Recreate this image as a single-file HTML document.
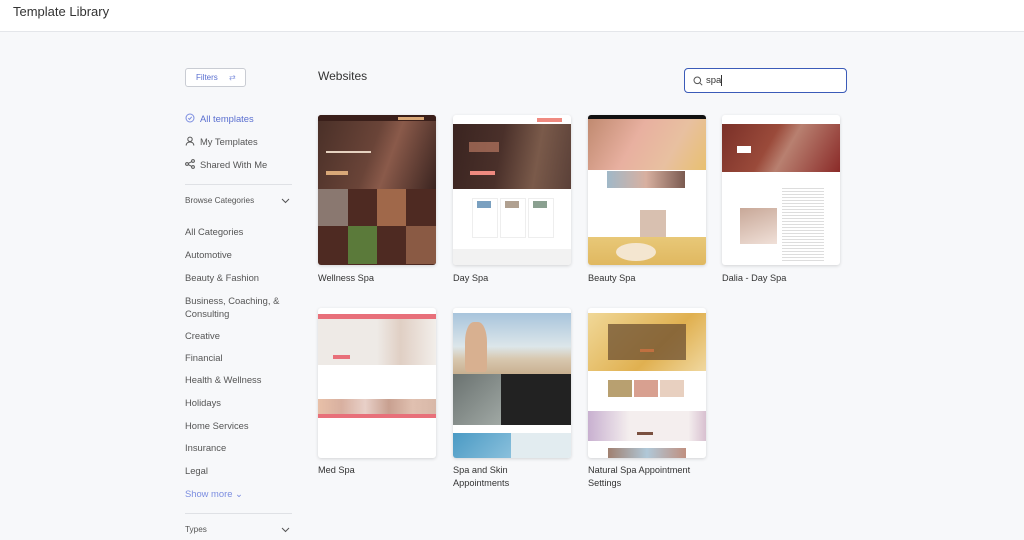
<!DOCTYPE html>
<html><head><meta charset="utf-8"><style>
*{margin:0;padding:0;box-sizing:border-box}
body{width:1024px;height:540px;overflow:hidden;background:#f7f8fa;font-family:"Liberation Sans",sans-serif;position:relative;color:#333}
.hdr{position:absolute;left:0;top:0;width:1024px;height:32px;background:#fff;border-bottom:1px solid #e4e6ea}
.hdr span{position:absolute;left:13px;top:4px;font-size:13px;color:#333}
.a{position:absolute}
.side{font-size:9.4px;color:#555}
.card{position:absolute;width:118px;height:150px;background:#fff;border-radius:3px;overflow:hidden;box-shadow:0 1px 3px rgba(0,0,0,.15)}
.card div{position:absolute}
.lbl{position:absolute;font-size:9.2px;color:#333;line-height:13px}
</style></head><body>
<div class="hdr"><span>Template Library</span></div>

<div class="a" style="left:185px;top:68px;width:61px;height:19px;border:1px solid #c9ccd3;border-radius:3px;background:#fff;font-size:8px;color:#5a6fd0;padding:4px 0 0 10px">Filters <span style="margin-left:9px;color:#8a9ae0">⇄</span></div>

<svg class="a" style="left:185px;top:113px" width="10" height="10" viewBox="0 0 10 10"><circle cx="5" cy="5" r="4" fill="none" stroke="#7b8de0" stroke-width="1"/><path d="M3.3 5.2l1.2 1.2 2.2-2.6" fill="none" stroke="#7b8de0" stroke-width="1"/></svg>
<div class="a side" style="left:200px;top:113px;color:#5a6fd0">All templates</div>
<svg class="a" style="left:185px;top:136px" width="10" height="10" viewBox="0 0 10 10"><circle cx="5" cy="3.3" r="2.2" fill="none" stroke="#555" stroke-width="1"/><path d="M1.2 9.5c0-2.2 1.7-3.5 3.8-3.5s3.8 1.3 3.8 3.5" fill="none" stroke="#555" stroke-width="1"/></svg>
<div class="a side" style="left:200px;top:136px">My Templates</div>
<svg class="a" style="left:185px;top:159px" width="10" height="10" viewBox="0 0 10 10"><circle cx="2" cy="5" r="1.4" fill="none" stroke="#555"/><circle cx="8" cy="2" r="1.4" fill="none" stroke="#555"/><circle cx="8" cy="8" r="1.4" fill="none" stroke="#555"/><path d="M3.2 4.4l3.6-1.8M3.2 5.6l3.6 1.8" stroke="#555"/></svg>
<div class="a side" style="left:200px;top:159px">Shared With Me</div>
<div class="a" style="left:185px;top:184px;width:107px;height:1px;background:#dfe1e5"></div>
<div class="a side" style="left:185px;top:196px;font-size:8.2px">Browse Categories</div>
<svg class="a" style="left:281px;top:198px" width="9" height="6" viewBox="0 0 9 6"><path d="M1 1l3.5 3.5L8 1" fill="none" stroke="#555"/></svg>

<div class="a side" style="left:185px;top:226px">All Categories</div>
<div class="a side" style="left:185px;top:249px">Automotive</div>
<div class="a side" style="left:185px;top:272px">Beauty &amp; Fashion</div>
<div class="a side" style="left:185px;top:294px;line-height:13px">Business, Coaching, &amp;<br>Consulting</div>
<div class="a side" style="left:185px;top:330px">Creative</div>
<div class="a side" style="left:185px;top:352px">Financial</div>
<div class="a side" style="left:185px;top:374px">Health &amp; Wellness</div>
<div class="a side" style="left:185px;top:397px">Holidays</div>
<div class="a side" style="left:185px;top:420px">Home Services</div>
<div class="a side" style="left:185px;top:442px">Insurance</div>
<div class="a side" style="left:185px;top:465px">Legal</div>
<div class="a side" style="left:185px;top:488px;color:#7b8de0">Show more ⌄</div>
<div class="a" style="left:185px;top:513px;width:107px;height:1px;background:#dfe1e5"></div>
<div class="a side" style="left:185px;top:525px;font-size:8.2px">Types</div>
<svg class="a" style="left:281px;top:527px" width="9" height="6" viewBox="0 0 9 6"><path d="M1 1l3.5 3.5L8 1" fill="none" stroke="#555"/></svg>

<div class="a" style="left:318px;top:69px;font-size:12px;color:#333">Websites</div>
<div class="a" style="left:684px;top:68px;width:163px;height:25px;border:1px solid #3b5bb8;border-radius:4px;background:#fff"></div>
<svg class="a" style="left:693px;top:76px" width="10" height="10" viewBox="0 0 10 10"><circle cx="4.3" cy="4.3" r="3.3" fill="none" stroke="#555"/><path d="M6.8 6.8l2.4 2.4" stroke="#555"/></svg>
<div class="a" style="left:706px;top:75px;font-size:9.5px;color:#333">spa<span style="border-left:1px solid #333;margin-left:0"></span></div>

<!-- Row 1 -->
<div class="card" style="left:318px;top:115px;background:#4e2a22">
 <div style="left:0;top:0;width:118px;height:6px;background:#3a1f1a"></div>
 <div style="left:80px;top:2px;width:26px;height:3px;background:#d9a878"></div>
 <div style="left:0;top:6px;width:118px;height:68px;background:linear-gradient(110deg,#4a3028 0%,#6a4438 45%,#8a5a4a 60%,#3a2420 100%)"></div>
 <div style="left:8px;top:36px;width:45px;height:2px;background:#e6d2c0"></div>
 <div style="left:8px;top:56px;width:22px;height:4px;background:#d9a878"></div>
 <div style="left:0;top:74px;width:30px;height:37px;background:#8a7870"></div>
 <div style="left:59px;top:74px;width:29px;height:37px;background:#a0684a"></div>
 <div style="left:30px;top:111px;width:29px;height:38px;background:#5b7a3a"></div>
 <div style="left:88px;top:111px;width:30px;height:38px;background:#8a5a44"></div>
</div>
<div class="lbl" style="left:318px;top:272px">Wellness Spa</div>

<div class="card" style="left:453px;top:115px">
 <div style="left:0;top:9px;width:118px;height:65px;background:linear-gradient(100deg,#3a2420 0%,#4a302a 40%,#7a5a4a 70%,#5a4038 100%)"></div>
 <div style="left:84px;top:3px;width:25px;height:4px;background:#ef8a80"></div>
 <div style="left:16px;top:27px;width:30px;height:10px;background:#c9836a;opacity:.6"></div>
 <div style="left:17px;top:56px;width:25px;height:4px;background:#ef8a80"></div>
 <div style="left:19px;top:83px;width:26px;height:40px;border:1px solid #eee"></div>
 <div style="left:47px;top:83px;width:26px;height:40px;border:1px solid #eee"></div>
 <div style="left:75px;top:83px;width:26px;height:40px;border:1px solid #eee"></div>
 <div style="left:24px;top:86px;width:14px;height:7px;background:#7aa0c0"></div>
 <div style="left:52px;top:86px;width:14px;height:7px;background:#b0a090"></div>
 <div style="left:80px;top:86px;width:14px;height:7px;background:#8aa090"></div>
 <div style="left:0;top:134px;width:118px;height:16px;background:#f2f2f2"></div>
</div>
<div class="lbl" style="left:453px;top:272px">Day Spa</div>

<div class="card" style="left:588px;top:115px">
 <div style="left:0;top:0;width:118px;height:4px;background:#111"></div>
 <div style="left:0;top:4px;width:118px;height:51px;background:linear-gradient(120deg,#c08a70 0%,#e8b0a0 40%,#e8c0a0 70%,#e8c070 100%)"></div>
 <div style="left:19px;top:56px;width:78px;height:17px;background:linear-gradient(90deg,#a0b8c8,#d8b0a0,#7a5a50)"></div>
 <div style="left:52px;top:95px;width:26px;height:27px;background:#d8c0b0"></div>
 <div style="left:0;top:122px;width:118px;height:28px;background:linear-gradient(180deg,#e8c878,#e0b860)"></div>
 <div style="left:28px;top:128px;width:40px;height:18px;background:#f4e6d0;border-radius:50%"></div>
</div>
<div class="lbl" style="left:588px;top:272px">Beauty Spa</div>

<div class="card" style="left:722px;top:115px">
 <div style="left:0;top:9px;width:118px;height:48px;background:linear-gradient(120deg,#7a3028 0%,#9a4a3a 40%,#b88070 55%,#8a2a28 100%)"></div>
 <div style="left:15px;top:31px;width:14px;height:7px;background:#fff"></div>
 <div style="left:18px;top:93px;width:37px;height:36px;background:linear-gradient(160deg,#c8a898,#f0e0d8)"></div>
 <div style="left:60px;top:73px;width:42px;height:75px;background:repeating-linear-gradient(180deg,#bbb 0 1px,transparent 1px 3px);opacity:.5"></div>
</div>
<div class="lbl" style="left:722px;top:272px">Dalia - Day Spa</div>

<!-- Row 2 -->
<div class="card" style="left:318px;top:308px">
 <div style="left:0;top:6px;width:118px;height:5px;background:#e8707a"></div>
 <div style="left:0;top:11px;width:118px;height:46px;background:linear-gradient(90deg,#eeeae6 50%,#e0cfc4 70%,#f2eeea 100%)"></div>
 <div style="left:15px;top:47px;width:17px;height:4px;background:#e8707a"></div>
 <div style="left:0;top:91px;width:118px;height:18px;background:linear-gradient(90deg,#e8c0a8,#d8b0a0,#e8d0c8,#c8a090,#e0c0b0,#d8b8a8)"></div>
 <div style="left:0;top:106px;width:118px;height:4px;background:#e8707a"></div>
</div>
<div class="lbl" style="left:318px;top:464px">Med Spa</div>

<div class="card" style="left:453px;top:308px">
 <div style="left:0;top:5px;width:118px;height:61px;background:linear-gradient(180deg,#a8c4dc 0%,#dce6ea 55%,#d8c8b0 75%,#c8b090 100%)"></div>
 <div style="left:12px;top:14px;width:22px;height:50px;background:#d8b090;border-radius:40% 40% 10% 10%"></div>
 <div style="left:0;top:66px;width:48px;height:51px;background:linear-gradient(135deg,#6a7270,#a0a8a4)"></div>
 <div style="left:48px;top:66px;width:70px;height:51px;background:#222"></div>
 <div style="left:0;top:125px;width:58px;height:25px;background:linear-gradient(135deg,#4a9ac4,#8ac0dc)"></div>
 <div style="left:58px;top:125px;width:60px;height:25px;background:#e2ecf0"></div>
</div>
<div class="lbl" style="left:453px;top:464px">Spa and Skin<br>Appointments</div>

<div class="card" style="left:588px;top:308px">
 <div style="left:0;top:5px;width:118px;height:58px;background:linear-gradient(135deg,#f0d898 0%,#e0b050 60%,#f0d8a0 100%)"></div>
 <div style="left:20px;top:16px;width:78px;height:36px;background:rgba(110,80,50,.75)"></div>
 <div style="left:52px;top:41px;width:14px;height:3px;background:#c07040"></div>
 <div style="left:20px;top:72px;width:24px;height:17px;background:#b8a070"></div>
 <div style="left:46px;top:72px;width:24px;height:17px;background:#d8a090"></div>
 <div style="left:72px;top:72px;width:24px;height:17px;background:#e8d0c0"></div>
 <div style="left:0;top:103px;width:118px;height:30px;background:linear-gradient(90deg,#c8b0d0 0%,#f4eeee 35%,#f4eeee 85%,#d8c0d0 100%)"></div>
 <div style="left:49px;top:124px;width:16px;height:3px;background:#7a5040"></div>
 <div style="left:20px;top:140px;width:78px;height:10px;background:linear-gradient(90deg,#a08070,#b0c8d8,#c09080)"></div>
</div>
<div class="lbl" style="left:588px;top:464px">Natural Spa Appointment<br>Settings</div>
</body></html>
